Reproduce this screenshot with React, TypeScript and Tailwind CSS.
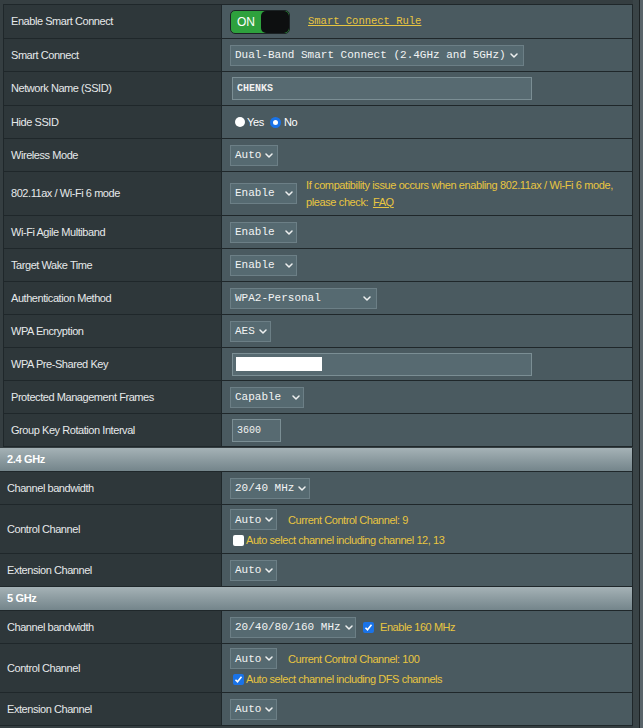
import React from "react";

const Chevron = () => (
  <svg width="8" height="5" viewBox="0 0 8 5" className="shrink-0">
    <path d="M1 1l3 3 3-3" stroke="#eef0f0" strokeWidth="1.5" fill="none" strokeLinecap="round" strokeLinejoin="round" />
  </svg>
);

function Select({ text, cls }: { text: string; cls: string }) {
  return (
    <div
      className={`flex h-[21px] shrink-0 items-center justify-between gap-[4px] border border-[#6c7f86] bg-[#566a71] pl-[4px] pr-[5px] font-['Liberation_Mono',monospace] text-[11px] text-[#f2f4f4] ${cls}`}
    >
      <span className="whitespace-pre">{text}</span>
      <Chevron />
    </div>
  );
}

function Input({ cls, children }: { cls: string; children?: React.ReactNode }) {
  return (
    <div
      className={`flex h-[23px] items-center border border-[#7b8e94] bg-[#576a71] px-[3px] font-['Liberation_Mono',monospace] text-[10px] font-bold text-[#f2f2f2] ${cls}`}
    >
      {children}
    </div>
  );
}

function Row({
  label,
  h,
  lw,
  children,
  col,
}: {
  label: string;
  h: string;
  lw: string;
  children?: React.ReactNode;
  col?: boolean;
}) {
  return (
    <div className={`flex border-b border-[#1f272a] ${h}`}>
      <div
        className={`flex shrink-0 items-center border-r border-[#1f272a] bg-[#2e373a] pl-[7px] text-[11px] tracking-[-0.04em] text-[#e6e9ea] ${lw}`}
      >
        {label}
      </div>
      <div
        className={`flex flex-1 bg-[#4a5a60] pl-[8px] ${col ? "flex-col justify-center gap-[2px]" : "items-center"}`}
      >
        {children}
      </div>
    </div>
  );
}

function Header({ text }: { text: string }) {
  return (
    <div className="flex h-[24px] items-center border-b border-[#1f272a] bg-linear-to-b from-[#a5b2b6] to-[#74858b] pl-[7px] text-[11px] font-bold tracking-[-0.03em] text-white">
      {text}
    </div>
  );
}

const yellow = "text-[#e8c540]";

function Checkbox({ checked }: { checked?: boolean }) {
  if (checked)
    return (
      <div className="flex h-[11px] w-[11px] shrink-0 items-center justify-center rounded-[2px] bg-[#1a73e8]">
        <svg width="9" height="9" viewBox="0 0 9 9">
          <path d="M1.5 4.8l2 2 4-5" stroke="white" strokeWidth="1.6" fill="none" />
        </svg>
      </div>
    );
  return <div className="h-[11px] w-[11px] shrink-0 rounded-[2px] bg-white" />;
}

export default function App() {
  const top = "w-[218px]";
  const low = "w-[222px]";
  return (
    <div className="flex h-[728px] w-[643px] overflow-hidden bg-[#353e41] font-['Liberation_Sans',Arial,sans-serif]">
      <div className="w-[633px] shrink-0">
        {/* Top table */}
        <div className="ml-[3px] mt-[4px] w-[630px] border-l border-r border-t border-[#1f272a]">
          <Row label="Enable Smart Connect" h="h-[34px]" lw={top}>
            <div className="flex h-[24px] w-[60px] overflow-hidden rounded-[5px] border border-[#1b2224] bg-[#2ea13d]">
              <div className="flex w-[30px] items-center justify-center text-[12px] text-white">ON</div>
              <div className="flex-1 rounded-[5px] bg-[#0d0f10]" />
            </div>
            <span className={`ml-[18px] font-['Liberation_Mono',monospace] text-[10.5px] underline ${yellow}`}>
              Smart Connect Rule
            </span>
          </Row>
          <Row label="Smart Connect" h="h-[33px]" lw={top}>
            <Select text="Dual-Band Smart Connect (2.4GHz and 5GHz)" cls="w-[294px]" />
          </Row>
          <Row label="Network Name (SSID)" h="h-[34px]" lw={top}>
            <Input cls="ml-[2px] w-[300px] pl-[4px]">CHENKS</Input>
          </Row>
          <Row label="Hide SSID" h="h-[33px]" lw={top}>
            <div className="ml-[5px] flex items-center text-[11px] tracking-[-0.03em] text-white">
              <div className="h-[10px] w-[10px] rounded-full bg-white" />
              <span className="ml-[2px]">Yes</span>
              <div className="ml-[6px] h-[11px] w-[11px] rounded-full border-[3px] border-[#1a73e8] bg-white" />
              <span className="ml-[3px]">No</span>
            </div>
          </Row>
          <Row label="Wireless Mode" h="h-[33px]" lw={top}>
            <Select text="Auto" cls="w-[48px]" />
          </Row>
          <Row label="802.11ax / Wi-Fi 6 mode" h="h-[44px]" lw={top}>
            <Select text="Enable " cls="w-[67px]" />
            <div className={`ml-[9px] text-[11px] leading-[17px] tracking-[-0.035em] ${yellow}`}>
              <div className="whitespace-nowrap">If compatibility issue occurs when enabling 802.11ax / Wi-Fi 6 mode,</div>
              <div>
                please check: <span className="ml-[2px] underline">FAQ</span>
              </div>
            </div>
          </Row>
          <Row label="Wi-Fi Agile Multiband" h="h-[33px]" lw={top}>
            <Select text="Enable " cls="w-[67px]" />
          </Row>
          <Row label="Target Wake Time" h="h-[33px]" lw={top}>
            <Select text="Enable " cls="w-[67px]" />
          </Row>
          <Row label="Authentication Method" h="h-[33px]" lw={top}>
            <Select text="WPA2-Personal" cls="w-[147px]" />
          </Row>
          <Row label="WPA Encryption" h="h-[33px]" lw={top}>
            <Select text="AES" cls="w-[41px]" />
          </Row>
          <Row label="WPA Pre-Shared Key" h="h-[33px]" lw={top}>
            <Input cls="ml-[2px] w-[300px]">
              <div className="h-[14px] w-[86px] bg-white" />
            </Input>
          </Row>
          <Row label="Protected Management Frames" h="h-[33px]" lw={top}>
            <Select text="Capable " cls="w-[74px]" />
          </Row>
          <Row label="Group Key Rotation Interval" h="h-[33px]" lw={top}>
            <Input cls="ml-[2px] w-[49px] pl-[4px] font-normal">3600</Input>
          </Row>
        </div>

        {/* 2.4 GHz */}
        <div className="mt-[1px] border-r border-[#1f272a]">
          <Header text="2.4 GHz" />
          <Row label="Channel bandwidth" h="h-[33px]" lw={low}>
            <Select text="20/40 MHz" cls="w-[80px]" />
          </Row>
          <Row label="Control Channel" h="h-[49px]" lw={low} col>
            <div className="flex items-center">
              <Select text="Auto" cls="w-[47px]" />
              <span className={`ml-[11px] text-[11px] tracking-[-0.04em] ${yellow}`}>Current Control Channel: 9</span>
            </div>
            <div className="ml-[3px] flex items-center">
              <Checkbox />
              <span className={`ml-[2px] text-[11px] tracking-[-0.04em] ${yellow}`}>
                Auto select channel including channel 12, 13
              </span>
            </div>
          </Row>
          <Row label="Extension Channel" h="h-[33px]" lw={low}>
            <Select text="Auto" cls="w-[47px]" />
          </Row>

          {/* 5 GHz */}
          <Header text="5 GHz" />
          <Row label="Channel bandwidth" h="h-[33px]" lw={low}>
            <Select text="20/40/80/160 MHz" cls="w-[126px]" />
            <div className="ml-[7px]">
              <Checkbox checked />
            </div>
            <span className={`ml-[6px] text-[11px] tracking-[-0.04em] ${yellow}`}>Enable 160 MHz</span>
          </Row>
          <Row label="Control Channel" h="h-[49px]" lw={low} col>
            <div className="flex items-center">
              <Select text="Auto" cls="w-[47px]" />
              <span className={`ml-[11px] text-[11px] tracking-[-0.04em] ${yellow}`}>Current Control Channel: 100</span>
            </div>
            <div className="ml-[3px] flex items-center">
              <Checkbox checked />
              <span className={`ml-[2px] text-[11px] tracking-[-0.04em] ${yellow}`}>
                Auto select channel including DFS channels
              </span>
            </div>
          </Row>
          <Row label="Extension Channel" h="h-[33px]" lw={low}>
            <Select text="Auto" cls="w-[47px]" />
          </Row>
        </div>
      </div>
      <div className="w-[6px] shrink-0 bg-[#3a4447]" />
      <div className="w-[1px] shrink-0 bg-[#1c2224]" />
      <div className="w-[3px] shrink-0 bg-[#59646a]" />
    </div>
  );
}
